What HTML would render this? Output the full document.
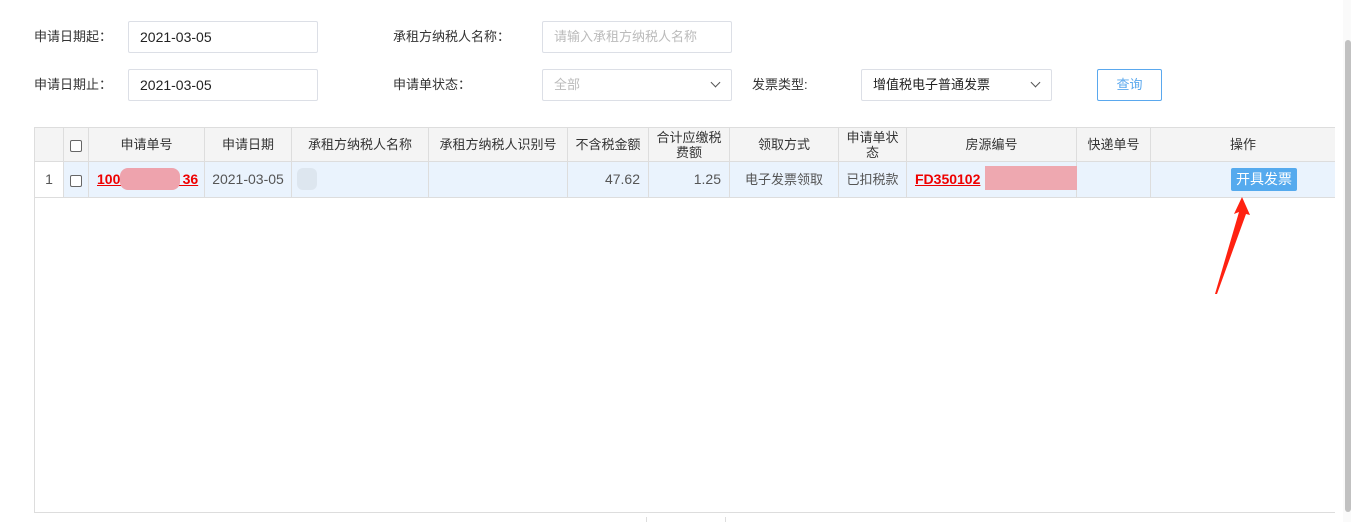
<!DOCTYPE html>
<html><head><meta charset="utf-8">
<style>
*{margin:0;padding:0;box-sizing:border-box}
body{width:1351px;height:522px;overflow:hidden;background:#fff;font-family:"Liberation Sans","Noto Sans CJK SC",sans-serif;font-size:13px;color:#333;position:relative}
.a{position:absolute}
.lbl{font-size:13px;color:#333;line-height:16px}
.inp{position:absolute;height:32px;border:1px solid #dcdfe6;border-radius:2px;background:#fff;font-size:14px;line-height:30px;padding-left:11px;color:#222}
.ph{color:#bbb}
.chev{position:absolute;right:12px;top:9px;width:7px;height:7px;border-right:1.3px solid #555;border-bottom:1.3px solid #555;transform:rotate(45deg)}
.th,.td{position:absolute;border-right:1px solid #ddd;text-align:center;font-size:13px}
.th{top:128px;height:33px;background:#f4f4f4;line-height:33px;color:#333}
.td{top:162px;height:35px;line-height:35px;color:#555;background:#eaf3fd}
.cb{display:inline-block;width:12px;height:12px;border:1px solid #666;border-radius:2px;vertical-align:middle;background:#fff}
.red{color:#e00;font-weight:bold;text-decoration:underline;font-size:14px}
</style></head><body>
<div class="a lbl" style="left:34px;top:29px">申请日期起：</div>
<div class="inp" style="left:128px;top:21px;width:190px">2021-03-05</div>
<div class="a lbl" style="left:393px;top:29px">承租方纳税人名称：</div>
<div class="inp ph" style="left:542px;top:21px;width:190px;font-size:13px">请输入承租方纳税人名称</div>

<div class="a lbl" style="left:34px;top:77px">申请日期止：</div>
<div class="inp" style="left:128px;top:69px;width:190px">2021-03-05</div>
<div class="a lbl" style="left:393px;top:77px">申请单状态：</div>
<div class="inp ph" style="left:542px;top:69px;width:190px;font-size:13px">全部<span class="chev"></span></div>
<div class="a lbl" style="left:752px;top:77px">发票类型:</div>
<div class="inp" style="left:861px;top:69px;width:191px;font-size:13px">增值税电子普通发票<span class="chev"></span></div>
<div class="a" style="left:1097px;top:69px;width:65px;height:32px;border:1px solid #5aa8ee;border-radius:2px;color:#5aa8ee;text-align:center;line-height:30px;font-size:13px">查询</div>

<!-- table frame -->
<div class="a" style="left:34px;top:127px;width:1301px;height:386px;border-left:1px solid #ddd;border-top:1px solid #ddd;border-bottom:1px solid #ddd"></div>
<div class="a" style="left:34px;top:161px;width:1301px;height:1px;background:#ddd"></div>
<div class="a" style="left:34px;top:197px;width:1301px;height:1px;background:#ddd"></div>

<div class="th" style="left:35px;width:29px"></div>
<div class="th" style="left:64px;width:25px"><span class="cb"></span></div>
<div class="th" style="left:89px;width:116px">申请单号</div>
<div class="th" style="left:205px;width:87px">申请日期</div>
<div class="th" style="left:292px;width:137px">承租方纳税人名称</div>
<div class="th" style="left:429px;width:139px">承租方纳税人识别号</div>
<div class="th" style="left:568px;width:81px">不含税金额</div>
<div class="th" style="left:649px;width:81px;line-height:15px;padding-top:2px">合计应缴税<br>费额</div>
<div class="th" style="left:730px;width:109px">领取方式</div>
<div class="th" style="left:839px;width:68px;line-height:15px;padding-top:2px">申请单状<br>态</div>
<div class="th" style="left:907px;width:170px">房源编号</div>
<div class="th" style="left:1077px;width:74px">快递单号</div>
<div class="th" style="left:1151px;width:184px;border-right:none">操作</div>

<div class="td" style="left:35px;width:29px;background:#fff;font-size:14px">1</div>
<div class="td" style="left:64px;width:25px"><span class="cb"></span></div>
<div class="td" style="left:89px;width:116px;text-align:left;padding-left:8px"><span class="red">100&nbsp;&nbsp;&nbsp;&nbsp;&nbsp;&nbsp;&nbsp;&nbsp;&nbsp;&nbsp;&nbsp;&nbsp;&nbsp;&nbsp;&nbsp;&nbsp;36</span></div>
<div class="a" style="left:120px;top:168px;width:60px;height:22px;background:#eea3ad;border-radius:8px"></div>
<div class="td" style="left:205px;width:87px;font-size:14px">2021-03-05</div>
<div class="td" style="left:292px;width:137px"></div>
<div class="a" style="left:297px;top:168px;width:20px;height:22px;background:#dde6ef;border-radius:6px"></div>
<div class="td" style="left:429px;width:139px"></div>
<div class="td" style="left:568px;width:81px;text-align:right;padding-right:8px;font-size:14px">47.62</div>
<div class="td" style="left:649px;width:81px;text-align:right;padding-right:8px;font-size:14px">1.25</div>
<div class="td" style="left:730px;width:109px">电子发票领取</div>
<div class="td" style="left:839px;width:68px">已扣税款</div>
<div class="td" style="left:907px;width:170px;text-align:left;padding-left:8px"><span class="red">FD350102</span></div>
<div class="a" style="left:985px;top:166px;width:92px;height:24px;background:#eea8b0"></div>
<div class="td" style="left:1077px;width:74px"></div>
<div class="td" style="left:1151px;width:184px;border-right:none"></div>
<div class="a" style="left:1231px;top:168px;width:66px;height:23px;background:#55aaee;border-radius:2px;color:#fff;text-align:center;line-height:23px;font-size:14px">开具发票</div>

<svg class="a" style="left:1205px;top:190px" width="50" height="110">
<polygon points="37,7 45,25 41,24 12,104 10,104 34,22 29,24" fill="#f21"/>
</svg>

<!-- bottom bits -->
<div class="a" style="left:646px;top:517px;width:1px;height:5px;background:#ddd"></div>
<div class="a" style="left:725px;top:517px;width:1px;height:5px;background:#ddd"></div>
<!-- scrollbar -->
<div class="a" style="left:1343px;top:0;width:8px;height:522px;background:#fafafa"></div>
<div class="a" style="left:1345px;top:40px;width:6px;height:472px;background:#c1c1c1;border-radius:3px"></div>
</body></html>
